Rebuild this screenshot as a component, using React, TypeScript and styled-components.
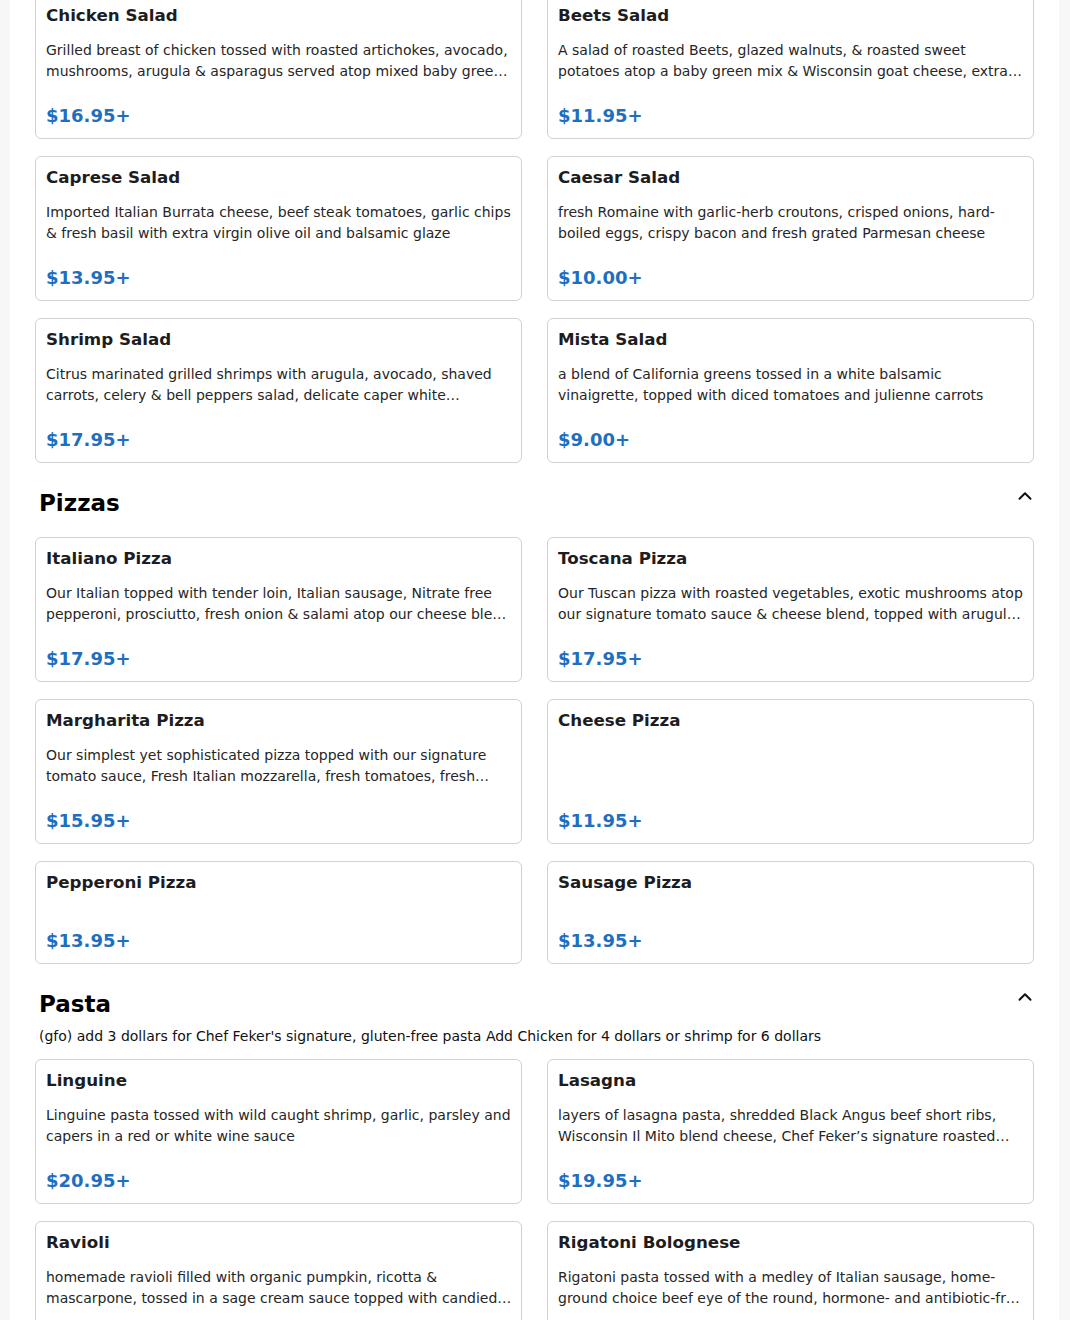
import styled, { createGlobalStyle } from "styled-components";
import { ChevronUp } from "lucide-react";

const GlobalStyle = createGlobalStyle`
  html, body {
    margin: 0;
    padding: 0;
    background: #f7f7f7;
    font-family: "DejaVu Sans", Verdana, sans-serif;
  }
`;

const Page = styled.main`
  margin: -6px 11px 0 10px;
  padding: 0 25px 40px;
  background: #ffffff;
`;

const Section = styled.section<{ $first?: boolean }>`
  display: flex;
  flex-direction: column;
  margin-top: ${(p) => (p.$first ? "0" : "27px")};
`;

const SectionHeader = styled.div`
  display: flex;
  justify-content: space-between;
  align-items: flex-start;
  padding-left: 4px;
  margin-bottom: 8px;
`;

const SectionTitle = styled.h2`
  margin: 0;
  font-size: 23px;
  line-height: 27px;
  font-weight: 700;
  color: #000;
`;

const Toggle = styled.button`
  display: flex;
  background: none;
  border: none;
  padding: 0;
  margin: -5px -2px 0 0;
  color: #111;
  cursor: pointer;
`;

const SectionNote = styled.p`
  margin: 0;
  padding-left: 4px;
  font-size: 14px;
  line-height: 21px;
  color: #111;
`;

const Grid = styled.div<{ $offset?: boolean }>`
  display: grid;
  grid-template-columns: 1fr 1fr;
  column-gap: 25px;
  row-gap: 16.75px;
  margin-top: ${(p) => (p.$offset ? "12.5px" : "0")};
`;

const Card = styled.article`
  display: flex;
  flex-direction: column;
  border: 1px solid #d2d2d2;
  border-radius: 6px;
  padding: 10px 9.5px 11px 10px;
  background: #fff;
  min-width: 0;
`;

const ItemName = styled.h3`
  margin: 0;
  font-size: 16.7px;
  line-height: 21px;
  font-weight: 700;
  color: #1d1d21;
`;

const ItemDesc = styled.p`
  margin: 14px 0 23px;
  font-size: 14px;
  line-height: 21px;
  color: #262626;
  display: -webkit-box;
  -webkit-line-clamp: 2;
  -webkit-box-orient: vertical;
  overflow: hidden;
`;

const Price = styled.div`
  margin-top: auto;
  font-size: 18px;
  line-height: 22px;
  font-weight: 700;
  color: #1f6fc1;
`;

type Item = { name: string; desc: string; price: string };
type Category = { title?: string; note?: string; items: Item[] };

const MENU: Category[] = [
  {
    items: [
      {
        name: "Chicken Salad",
        desc: "Grilled breast of chicken tossed with roasted artichokes, avocado, mushrooms, arugula & asparagus served atop mixed baby greens with balsamic vinaigrette",
        price: "$16.95+",
      },
      {
        name: "Beets Salad",
        desc: "A salad of roasted Beets, glazed walnuts, & roasted sweet potatoes atop a baby green mix & Wisconsin goat cheese, extra virgin olive oil and balsamic glaze",
        price: "$11.95+",
      },
      {
        name: "Caprese Salad",
        desc: "Imported Italian Burrata cheese, beef steak tomatoes, garlic chips & fresh basil with extra virgin olive oil and balsamic glaze",
        price: "$13.95+",
      },
      {
        name: "Caesar Salad",
        desc: "fresh Romaine with garlic-herb croutons, crisped onions, hard-boiled eggs, crispy bacon and fresh grated Parmesan cheese",
        price: "$10.00+",
      },
      {
        name: "Shrimp Salad",
        desc: "Citrus marinated grilled shrimps with arugula, avocado, shaved carrots, celery & bell peppers salad, delicate caper white balsamic vinaigrette",
        price: "$17.95+",
      },
      {
        name: "Mista Salad",
        desc: "a blend of California greens tossed in a white balsamic vinaigrette, topped with diced tomatoes and julienne carrots",
        price: "$9.00+",
      },
    ],
  },
  {
    title: "Pizzas",
    items: [
      {
        name: "Italiano Pizza",
        desc: "Our Italian topped with tender loin, Italian sausage, Nitrate free pepperoni, prosciutto, fresh onion & salami atop our cheese blend and signature tomato sauce",
        price: "$17.95+",
      },
      {
        name: "Toscana Pizza",
        desc: "Our Tuscan pizza with roasted vegetables, exotic mushrooms atop our signature tomato sauce & cheese blend, topped with arugula and shaved Parmesan",
        price: "$17.95+",
      },
      {
        name: "Margharita Pizza",
        desc: "Our simplest yet sophisticated pizza topped with our signature tomato sauce, Fresh Italian mozzarella, fresh tomatoes, fresh basil and extra virgin olive oil",
        price: "$15.95+",
      },
      { name: "Cheese Pizza", desc: "", price: "$11.95+" },
      { name: "Pepperoni Pizza", desc: "", price: "$13.95+" },
      { name: "Sausage Pizza", desc: "", price: "$13.95+" },
    ],
  },
  {
    title: "Pasta",
    note: "(gfo) add 3 dollars for Chef Feker's signature, gluten-free pasta Add Chicken for 4 dollars or shrimp for 6 dollars",
    items: [
      {
        name: "Linguine",
        desc: "Linguine pasta tossed with wild caught shrimp, garlic, parsley and capers in a red or white wine sauce",
        price: "$20.95+",
      },
      {
        name: "Lasagna",
        desc: "layers of lasagna pasta, shredded Black Angus beef short ribs, Wisconsin Il Mito blend cheese, Chef Feker’s signature roasted tomato sauce",
        price: "$19.95+",
      },
      {
        name: "Ravioli",
        desc: "homemade ravioli filled with organic pumpkin, ricotta & mascarpone, tossed in a sage cream sauce topped with candied walnuts",
        price: "$18.95+",
      },
      {
        name: "Rigatoni Bolognese",
        desc: "Rigatoni pasta tossed with a medley of Italian sausage, home-ground choice beef eye of the round, hormone- and antibiotic-free chicken",
        price: "$19.95+",
      },
    ],
  },
];

export default function App() {
  return (
    <>
      <GlobalStyle />
      <Page>
        {MENU.map((cat, i) => (
          <Section key={cat.title ?? i} $first={!cat.title}>
            {cat.title && (
              <SectionHeader>
                <SectionTitle>{cat.title}</SectionTitle>
                <Toggle aria-label={`Collapse ${cat.title}`}>
                  <ChevronUp size={22} strokeWidth={2.2} />
                </Toggle>
              </SectionHeader>
            )}
            {cat.note && <SectionNote>{cat.note}</SectionNote>}
            <Grid $offset={!!cat.title}>
              {cat.items.map((item) => (
                <Card key={item.name}>
                  <ItemName>{item.name}</ItemName>
                  <ItemDesc>{item.desc}</ItemDesc>
                  <Price>{item.price}</Price>
                </Card>
              ))}
            </Grid>
          </Section>
        ))}
      </Page>
    </>
  );
}
